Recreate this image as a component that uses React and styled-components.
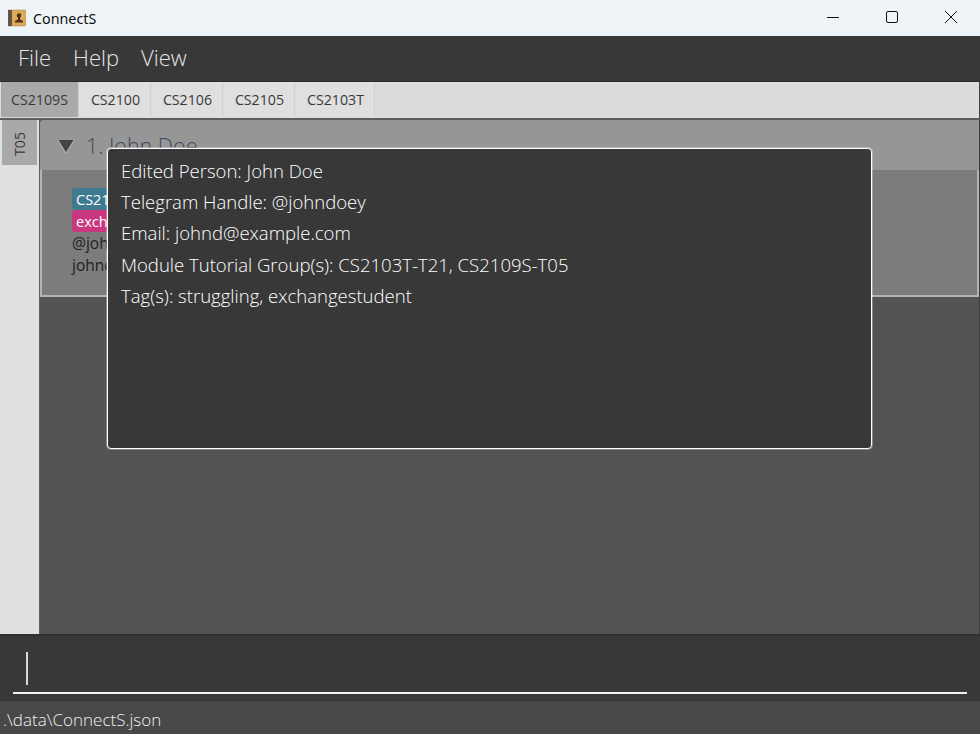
import React from 'react';
import styled, { createGlobalStyle } from 'styled-components';

const Global = createGlobalStyle`
  html, body { margin: 0; padding: 0; height: 100%; background: #383838; }
  #root { height: 100%; }
  * { box-sizing: border-box; }
`;

const Win = styled.div`
  position: relative;
  width: 980px;
  height: 734px;
  display: flex;
  flex-direction: column;
  overflow: hidden;
  font-family: "Open Sans", "Noto Sans", sans-serif;
`;

const TitleBar = styled.div`
  height: 36px;
  flex: none;
  background: #eff4f9;
  display: flex;
  align-items: center;
  padding-left: 8px;
`;

const AppIcon = styled.svg`
  width: 18px;
  height: 18px;
  margin-right: 7px;
`;

const AppName = styled.div`
  font-family: "Noto Sans", sans-serif;
  font-size: 14.3px;
  color: #111;
`;

const WinButtons = styled.div`
  margin-left: auto;
  display: flex;
  height: 100%;
  padding-bottom: 2px;
`;

const WinButton = styled.div`
  width: 59px;
  display: flex;
  align-items: center;
  justify-content: center;
`;

const MenuBar = styled.div`
  height: 45px;
  flex: none;
  background: #383838;
  display: flex;
  align-items: center;
  padding: 0 0 3px 18px;
  gap: 22px;
`;

const MenuItem = styled.div`
  font-size: 22px;
  font-weight: 300;
  color: #e6e6e6;
`;

const TabBar = styled.div`
  height: 39px;
  flex: none;
  background: #dcdcdc;
  border-top: 1px solid #2c2c2c;
  border-bottom: 2px solid #5e5e5e;
  border-right: 1px solid #444;
  display: flex;
  padding: 0 0 0 1px;
  gap: 2px;
`;

const Tab = styled.div`
  width: ${p => p.$w}px;
  height: 35px;
  background: ${p => (p.$active ? '#a9a9a9' : '#dfdfdf')};
  border-right: 1px solid #cfcfcf;
  display: flex;
  align-items: center;
  justify-content: center;
  font-size: 14.2px;
  color: #3a3a3a;
`;

const Body = styled.div`
  flex: 1;
  min-height: 0;
  display: flex;
  background: #535353;
  border-right: 1px solid #3c3c3c;
`;

const SideTabs = styled.div`
  width: 40px;
  flex: none;
  background: #e0e0e0;
  border-right: 1px solid #5e5e5e;
  padding-left: 2px;
`;

const SideTab = styled.div`
  width: 35px;
  height: 45px;
  background: #a9a9a9;
  display: flex;
  align-items: center;
  justify-content: center;
`;

const SideLabel = styled.span`
  transform: rotate(-90deg);
  font-size: 14.2px;
  color: #3a3a3a;
  padding-right: 3px;
`;

const Content = styled.div`
  flex: 1;
  min-width: 0;
  display: flex;
  flex-direction: column;
`;

const CardHead = styled.div`
  height: 50px;
  background: #969696;
  border-top-left-radius: 3px;
  display: flex;
  align-items: center;
  padding-left: 17px;
  gap: 11px;
`;

const Arrow = styled.svg`
  width: 18px;
  height: 15px;
  margin-top: 2px;
`;

const HeadTitle = styled.div`
  font-size: 21.5px;
  font-weight: 300;
  color: #3e4a5a;
`;

const CardBody = styled.div`
  height: 127px;
  background: #7c7c7c;
  border: 2px solid #b4b4b4;
  border-top: none;
  padding: 18px 30px;
  display: flex;
  flex-direction: column;
  align-items: flex-start;
`;

const Chip = styled.div`
  height: 22px;
  background: ${p => p.$bg};
  border-radius: 3px;
  padding: 0 4px;
  display: flex;
  align-items: center;
  font-size: 14.5px;
  color: #fff;
`;

const CardLine = styled.div`
  font-size: 15.5px;
  line-height: 22px;
  color: #1f1f1f;
`;

const Popup = styled.div`
  position: absolute;
  left: 107px;
  top: 148px;
  width: 765px;
  height: 301px;
  background: #383838;
  border: 1px solid #fff;
  box-shadow: 0 0 0 1px rgba(255, 255, 255, 0.3);
  border-radius: 4px;
  padding: 6px 13px;
`;

const PopupLine = styled.div`
  font-size: 18.55px;
  font-weight: 300;
  line-height: 31.2px;
  color: #fff;
  white-space: nowrap;
`;

const CommandBox = styled.div`
  height: 66px;
  flex: none;
  background: #383838;
  border-top: 2px solid #2f2f2f;
  padding: 0 13px;
  display: flex;
`;

const CommandInner = styled.div`
  flex: 1;
  border-bottom: 2px solid #f0f0f0;
  margin-bottom: 6px;
  padding: 16px 0 0 13px;
`;

const Caret = styled.div`
  width: 2px;
  height: 33px;
  background: #d8d8d8;
`;

const StatusBar = styled.div`
  height: 34px;
  flex: none;
  background: #484848;
  border-top: 1px solid #333;
  display: flex;
  align-items: center;
  padding: 3px 0 0 3px;
  font-size: 17px;
  font-weight: 300;
  color: #f0f0f0;
`;

const tabs = [
  ['CS2109S', 78, true],
  ['CS2100', 70],
  ['CS2106', 70],
  ['CS2105', 70],
  ['CS2103T', 78],
];

const lines = [
  'Edited Person: John Doe',
  'Telegram Handle: @johndoey',
  'Email: johnd@example.com',
  'Module Tutorial Group(s): CS2103T-T21, CS2109S-T05',
  'Tag(s): struggling, exchangestudent',
];

export default function App() {
  return (
    <Win>
      <Global />
      <TitleBar>
        <AppIcon viewBox="0 0 18 18">
          <rect x="0" y="1" width="18" height="16" rx="1" fill="#dcaa58" stroke="#a98a55" strokeWidth="0.5" />
          <rect x="0" y="1" width="4" height="16" fill="#5f5445" />
          <circle cx="11" cy="6.5" r="2.2" fill="#4a3213" />
          <path d="M10 8h2v2.5l3 1.5v1.5H7V12l3-1.5z" fill="#4a3213" />
        </AppIcon>
        <AppName>ConnectS</AppName>
        <WinButtons>
          <WinButton>
            <svg width="12" height="12"><path d="M0 6.5h12" stroke="#111" /></svg>
          </WinButton>
          <WinButton>
            <svg width="12" height="12"><rect x="0.5" y="0.5" width="11" height="11" rx="1.5" fill="none" stroke="#111" /></svg>
          </WinButton>
          <WinButton>
            <svg width="12" height="12"><path d="M0 0l12 12M12 0L0 12" stroke="#111" /></svg>
          </WinButton>
        </WinButtons>
      </TitleBar>

      <MenuBar>
        <MenuItem>File</MenuItem>
        <MenuItem>Help</MenuItem>
        <MenuItem>View</MenuItem>
      </MenuBar>

      <TabBar>
        {tabs.map(([name, w, active]) => (
          <Tab key={name} $w={w} $active={active}>{name}</Tab>
        ))}
      </TabBar>

      <Body>
        <SideTabs>
          <SideTab><SideLabel>T05</SideLabel></SideTab>
        </SideTabs>
        <Content>
          <CardHead>
            <Arrow viewBox="0 0 18 15">
              <path d="M1 1h16L9 14z" fill="#444" />
              <path d="M17 1L9 14 1 1" fill="none" stroke="#d0d0d0" strokeWidth="0.7" />
            </Arrow>
            <HeadTitle>1. John Doe</HeadTitle>
          </CardHead>
          <CardBody>
            <Chip $bg="#3e7b91">CS2103T-T21</Chip>
            <Chip $bg="#c9377f">exchangestudent</Chip>
            <CardLine>@johndoey</CardLine>
            <CardLine>johnd@example.com</CardLine>
          </CardBody>
        </Content>
      </Body>

      <CommandBox>
        <CommandInner><Caret /></CommandInner>
      </CommandBox>
      <StatusBar>.\data\ConnectS.json</StatusBar>

      <Popup>
        {lines.map(l => <PopupLine key={l}>{l}</PopupLine>)}
      </Popup>
    </Win>
  );
}
